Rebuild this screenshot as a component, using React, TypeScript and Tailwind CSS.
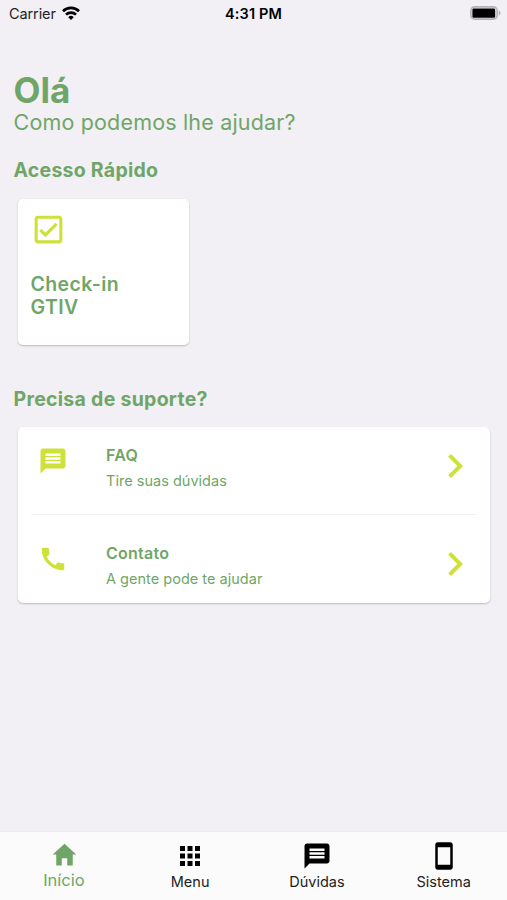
import type { IconType } from "react-icons";
import { IoMdHome } from "react-icons/io";
import {
  MdApps,
  MdCall,
  MdChevronRight,
  MdMessage,
  MdOutlineCheckBox,
  MdStayPrimaryPortrait,
} from "react-icons/md";

type SupportItem = {
  title: string;
  description: string;
  icon: IconType;
};

type TabItem = {
  label: string;
  icon: IconType;
  active?: boolean;
};

const supportItems: SupportItem[] = [
  { title: "FAQ", description: "Tire suas dúvidas", icon: MdMessage },
  { title: "Contato", description: "A gente pode te ajudar", icon: MdCall },
];

const tabs: TabItem[] = [
  { label: "Início", icon: IoMdHome, active: true },
  { label: "Menu", icon: MdApps },
  { label: "Dúvidas", icon: MdMessage },
  { label: "Sistema", icon: MdStayPrimaryPortrait },
];

export default function App() {
  return (
    <div className="flex h-[900px] w-[507px] flex-col overflow-hidden bg-[#f2eff5] font-['Inter',sans-serif] text-[#6fa667]">
      <StatusBar />
      <main className="flex-1 px-[13px] pt-[41px]">
        <h1 className="ml-[0.5px] text-[35px] leading-[42px] font-bold">Olá</h1>
        <p className="-mt-px ml-[0.5px] text-[21.5px] leading-[25px] tracking-[0.17px]">Como podemos lhe ajudar?</p>

        <h2 className="mt-[23px] ml-[0.5px] text-[19.5px] leading-6 font-bold tracking-[0.25px]">Acesso Rápido</h2>
        <QuickAccessCard />

        <h2 className="mt-[42px] ml-[0.5px] text-[19.5px] leading-6 font-bold tracking-[0.28px]">Precisa de suporte?</h2>
        <section className="mr-1 ml-[5px] mt-4 h-[176px] rounded-[5px] bg-white px-[13px] shadow-[0_1px_2px_rgba(0,0,0,0.22)]">
          {supportItems.map((item) => (
            <SupportRow key={item.title} item={item} />
          ))}
        </section>
      </main>
      <TabBar />
    </div>
  );
}

function StatusBar() {
  return (
    <header className="grid h-7 shrink-0 grid-cols-3 items-center px-[9px] text-black">
      <div className="flex items-center gap-[6px]">
        <span className="text-[14.5px] leading-7 tracking-[-0.1px] text-[#222]">Carrier</span>
        <WifiIcon />
      </div>
      <span className="text-center text-[14.5px] leading-7 font-semibold tracking-[0.15px]">4:31 PM</span>
      <div className="-mr-[2px] flex justify-end">
        <BatteryIcon />
      </div>
    </header>
  );
}

function WifiIcon() {
  return (
    <svg className="-mt-[2px] h-[14px] w-[18px]" viewBox="0 0 18 14" fill="none" stroke="currentColor" strokeWidth="2.7">
      <path d="M1 5.2a11.4 11.4 0 0 1 16 0" />
      <path d="M4 8.6a7.2 7.2 0 0 1 10 0" />
      <path d="M9 14 6.2 11.2a4 4 0 0 1 5.6 0z" fill="currentColor" stroke="none" />
    </svg>
  );
}

function BatteryIcon() {
  return (
    <svg className="-mt-[2px] -mr-[1px] h-[14px] w-[31px]" viewBox="0 0 31 14">
      <rect x="0.9" y="0.9" width="26.2" height="12.2" rx="3.6" fill="none" stroke="#b3b1b5" strokeWidth="1.6" />
      <rect x="2.4" y="2.4" width="22.8" height="9.4" rx="1.4" fill="#000" />
      <path d="M28.7 4.5c1.2.5 1.8 1.4 1.8 2.5s-.6 2-1.8 2.5z" fill="#b3b1b5" />
    </svg>
  );
}

function QuickAccessCard() {
  return (
    <article className="mt-[17px] ml-[5px] h-[146px] w-[171px] rounded-[5px] bg-white px-[12.5px] pt-3 shadow-[0_1px_2px_rgba(0,0,0,0.22)]">
      <MdOutlineCheckBox className="-ml-[0.5px] size-[37px] text-[#cde138]" />
      <p className="mt-[25px] w-[110px] text-[19.5px] leading-[23px] font-semibold tracking-[0.4px]">
        Check-in GTIV
      </p>
    </article>
  );
}

function SupportRow({ item }: { item: SupportItem }) {
  const Icon = item.icon;

  return (
    <div className="flex h-[88px] border-b border-[#f3f3f3] last:mt-[10px] last:border-b-0">
      <Icon className="mt-[19px] ml-[6.5px] size-[30px] text-[#cde138]" />
      <div className="mt-4 ml-[38.5px] flex-1">
        <h3 className="text-[16px] leading-6 font-semibold tracking-[0.25px]">{item.title}</h3>
        <p className="mt-[1.5px] text-[14.5px] leading-6 tracking-[0.02px]">{item.description}</p>
      </div>
      <MdChevronRight className="mt-[15px] mr-[-2px] size-12 text-[#cde138]" />
    </div>
  );
}

function TabBar() {
  return (
    <nav className="grid h-[69px] shrink-0 grid-cols-4 border-t border-[#ececee] bg-[#fbfbfb]">
      {tabs.map(({ label, icon: Icon, active }) => (
        <div
          key={label}
          className={`flex flex-col items-center ${active ? "pt-2 pl-px text-[#6fa667]" : "pt-[9px] text-black"}`}
        >
          <Icon className={active ? "ml-px size-[29px]" : "size-[30px]"} />
          <span className={active ? "mt-px text-[16.5px] leading-5" : "mt-px text-[14.5px] leading-5 text-[#222]"}>
            {label}
          </span>
        </div>
      ))}
    </nav>
  );
}
